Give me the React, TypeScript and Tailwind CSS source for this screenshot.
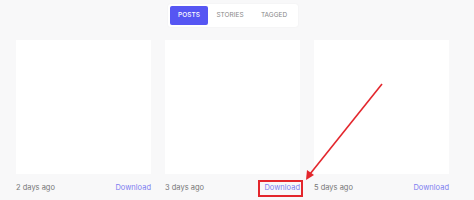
import { useState } from 'react'

const tabs = ['POSTS', 'STORIES', 'TAGGED']

const posts = [
  { id: 1, age: '2 days ago' },
  { id: 2, age: '3 days ago', marked: true },
  { id: 3, age: '5 days ago' },
]

export default function App() {
  const [active, setActive] = useState('POSTS')

  return (
    <div
      className="relative h-[200px] w-[474px] overflow-hidden bg-[#f8f8f9]"
      style={{ fontFamily: 'Inter, "Noto Sans", sans-serif' }}
    >
      <div className="flex pl-[168px] pt-[4px]">
        <div className="flex rounded-[3px] bg-white p-[2px] shadow-[0_0_2px_rgba(0,0,0,0.05)]">
          {tabs.map((tab) => (
            <button
              key={tab}
              type="button"
              onClick={() => setActive(tab)}
              className={
                tab === active
                  ? 'h-[19px] w-[38px] rounded-[2px] bg-[#5656f3] text-[6.5px] font-medium text-white'
                  : 'h-[19px] w-[44px] text-[6.5px] text-[#888]'
              }
            >
              {tab}
            </button>
          ))}
        </div>
      </div>

      <div className="mt-[13px] flex gap-[14px] pl-[16px]">
        {posts.map((post) => (
          <div key={post.id} className="w-[135px]">
            <div className="h-[134px] bg-white" />
            <div className="mt-[9px] flex items-center justify-between text-[7.5px] leading-[10px]">
              <span className="text-[#777]">{post.age}</span>
              <span className="relative text-[#7d7df0]">
                Download
                {post.marked && (
                  <span className="absolute -bottom-[4px] -left-[6px] -right-[3px] -top-[3px] border-2 border-[#e3262c]" />
                )}
              </span>
            </div>
          </div>
        ))}
      </div>

      <svg className="absolute left-0 top-0" width="474" height="200" viewBox="0 0 474 200">
        <line x1="382" y1="84" x2="310" y2="174" stroke="#e3262c" strokeWidth="1.6" />
        <polygon points="306,180 307,170 314,175" fill="#e3262c" />
      </svg>
    </div>
  )
}
